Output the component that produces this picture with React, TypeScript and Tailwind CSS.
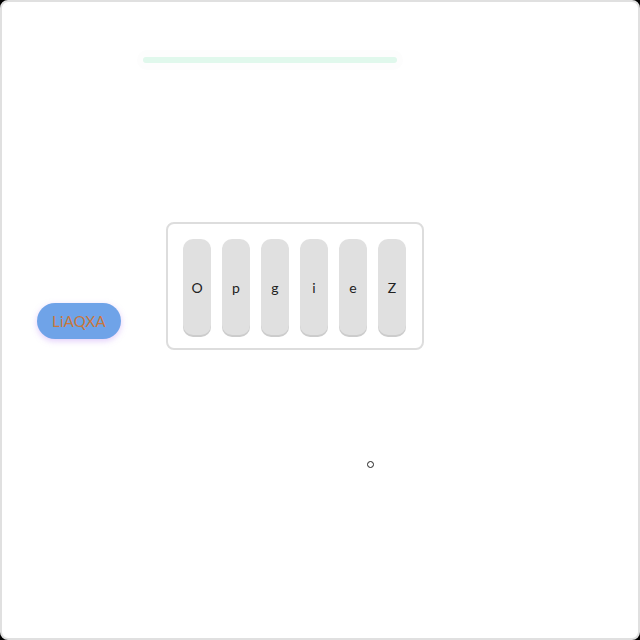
import React from 'react';

const keys = ['O', 'p', 'g', 'i', 'e', 'Z'];

export default function App() {
  return (
    <div className="w-[640px] h-[640px] bg-black">
      <div className="w-full h-full bg-white border-2 border-[#e0e0e0] rounded-lg flex flex-col items-start font-['Lato',sans-serif]">
        {/* progress strip */}
        <div className="ml-[135px] mt-[48px] px-[6px] py-[7px] rounded-xl bg-[#fdfdfd]">
          <div className="w-[254px] h-[6px] rounded-sm bg-[#e0f8ec]" />
        </div>

        <div className="flex items-start mt-[152px] ml-[35px]">
          <button className="mt-[81px] w-[84px] h-[36px] rounded-full bg-[#6fa3e8] text-[#c8773c] text-[15px] tracking-[0.2px] shadow-[0_2px_6px_rgba(170,110,240,0.35)]">
            LiAQXA
          </button>

          {/* key tray */}
          <div className="ml-[45px] w-[258px] h-[128px] border-2 border-[#dddddd] rounded-lg flex gap-[11px] pl-[15px] pt-[15px]">
            {keys.map((k) => (
              <div
                key={k}
                className="w-[28px] h-[96px] rounded-[10px] bg-[#e0e0e0] shadow-[0_2px_0_#cccccc] flex items-center justify-center text-[14px] text-[#222222]"
              >
                {k}
              </div>
            ))}
          </div>
        </div>

        <div className="ml-[365px] mt-[111px] w-[7px] h-[7px] rounded-full border-[1.5px] border-[#222222]" />
      </div>
    </div>
  );
}
